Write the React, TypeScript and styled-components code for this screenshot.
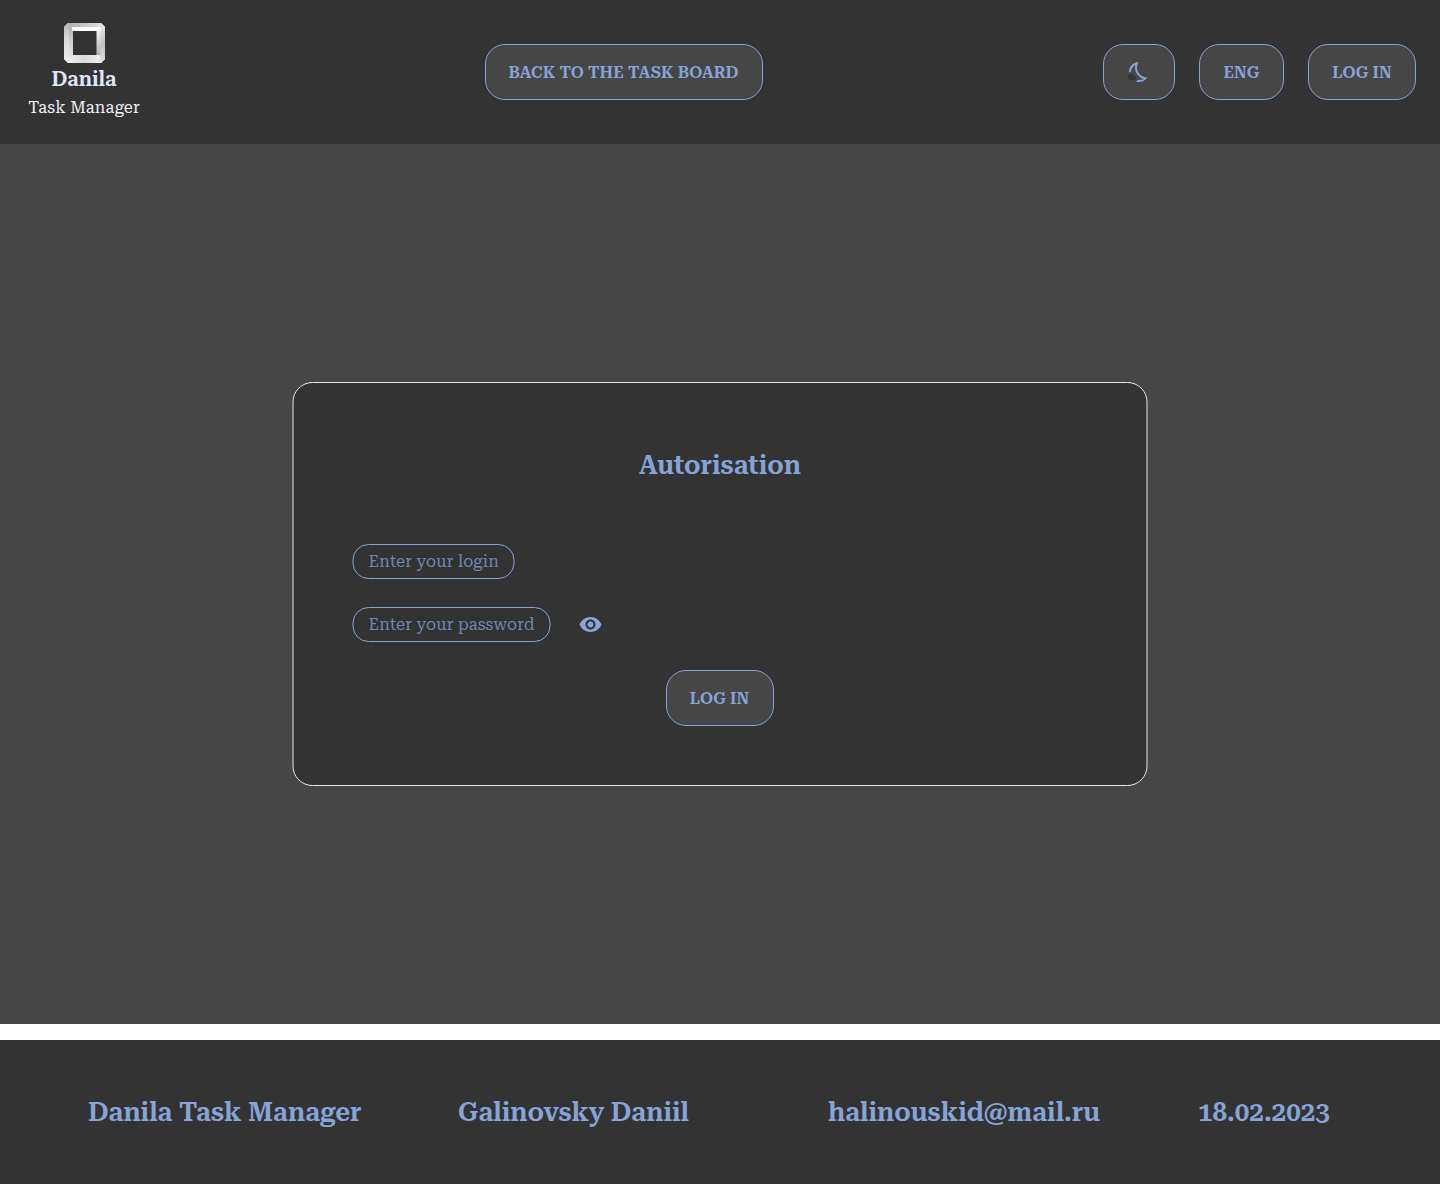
import React from 'react';
import styled, { createGlobalStyle } from 'styled-components';
import { MdVisibility } from 'react-icons/md';

const blue = '#87a4d8';
const dark = '#333333';
const grey = '#464646';

const GlobalStyle = createGlobalStyle`
  * { box-sizing: border-box; }
  body { margin: 0; background: #fff; font-family: "Roboto Serif", "Noto Serif", "DejaVu Serif Condensed", "DejaVu Serif", serif; }
`;
const Page = styled.div`
  min-height: 1184px;
  display: flex;
  flex-direction: column;
`;
const Header = styled.header`
  height: 144px;
  padding: 0 24px;
  background: ${dark};
  display: flex;
  align-items: center;
  justify-content: space-between;
`;
const Brand = styled.div`
  width: 120px;
  height: 100px;
  display: flex;
  flex-direction: column;
  align-items: center;
  white-space: nowrap;
`;
const BrandName = styled.div`
  margin: 1px 0;
  font-size: 20px;
  line-height: 28px;
  font-weight: 600;
  color: #dfe6f8;
`;
const BrandSub = styled.div`
  font-size: 16.4px;
  line-height: 28px;
  letter-spacing: 0.18px;
  color: #f1f1f1;
`;
const Actions = styled.nav`
  display: flex;
  gap: 24px;
`;
const Button = styled.button<{ $width: number }>`
  width: ${p => p.$width}px;
  height: 56px;
  padding: 0;
  display: flex;
  align-items: center;
  justify-content: center;
  border: 1px solid ${blue};
  border-radius: 20px;
  background: ${grey};
  color: ${blue};
  font-family: inherit;
  font-size: 16.3px;
  letter-spacing: 0.08px;
  font-weight: 600;
  white-space: nowrap;
`;
const Main = styled.main`
  height: 880px;
  background: ${grey};
  display: flex;
  align-items: center;
  justify-content: center;
`;
const Form = styled.section`
  width: 855px;
  height: 404px;
  margin-right: 1px;
  transform: translateX(0.5px);
  padding: 59px;
  border: 1px solid #dfe6f8;
  border-radius: 20px;
  background: ${dark};
  display: flex;
  flex-direction: column;
`;
const Title = styled.h1`
  margin: 0 0 56px;
  font-size: 26px;
  line-height: 46px;
  font-weight: 600;
  text-align: center;
  color: ${blue};
`;
const FieldRow = styled.div`
  height: 35px;
  margin-bottom: 28px;
  display: flex;
  align-items: center;
  gap: 28px;
  color: ${blue};
`;
const Field = styled.input<{ $width: number }>`
  width: ${p => p.$width}px;
  height: 35px;
  padding: 0 15px;
  border: 1px solid ${blue};
  border-radius: 16px;
  background: transparent;
  color: ${blue};
  font-family: inherit;
  font-size: 16.4px;
  letter-spacing: 0.18px;
  &::placeholder { color: ${blue}; opacity: 0.75; }
`;
const EyeIcon = styled(MdVisibility)`
  margin-bottom: 1px;
  transform: translateY(0.5px);
`;
const Submit = styled.div`
  display: flex;
  justify-content: center;
  transform: translateX(-0.5px);
`;
const Footer = styled.footer`
  height: 144px;
  margin-top: 16px;
  padding: 0 88px;
  background: ${dark};
  display: grid;
  grid-template-columns: 370px 370px 370px 1fr;
  align-items: center;
  color: ${blue};
  font-size: 26px;
  font-weight: 600;
  white-space: nowrap;
`;

const Logo = () => (
  <svg width="42" height="42" viewBox="0 0 42 42">
    <defs>
      <linearGradient id="top">
        <stop stopColor="#a6a6a6" />
        <stop offset="1" stopColor="#e6e6e6" />
      </linearGradient>
      <linearGradient id="left" x2="0" y2="1">
        <stop stopColor="#b4b4b4" />
        <stop offset="0.4" stopColor="#dcdcdc" />
        <stop offset="1" stopColor="#eceeed" />
      </linearGradient>
      <linearGradient id="innerLeft" x2="0" y2="1">
        <stop stopColor="#a4a4a4" />
        <stop offset="1" stopColor="#dedede" />
      </linearGradient>
      <linearGradient id="right" x2="0" y2="1">
        <stop stopColor="#e4e4e4" />
        <stop offset="0.5" stopColor="#c2c2c2" />
        <stop offset="1" stopColor="#dde0df" />
      </linearGradient>
      <linearGradient id="innerRight" x2="0" y2="1">
        <stop stopColor="#f6f6f6" />
        <stop offset="1" stopColor="#b0b0b0" />
      </linearGradient>
      <linearGradient id="bottom">
        <stop stopColor="#f0f2f1" />
        <stop offset="0.5" stopColor="#dadada" />
        <stop offset="1" stopColor="#f0f0f0" />
      </linearGradient>
    </defs>
    <path d="M5 1h33l4 4v32l-4 4H5l-4-4V5z" fill="url(#bottom)" />
    <path d="M5 1h33l4 4H9L1 5z" fill="url(#top)" />
    <path d="M1 5l4-4 5 4v28l-5 8-4-4z" fill="url(#left)" />
    <path d="M6 5h4v28l-4 4z" fill="url(#innerLeft)" opacity="0.45" />
    <path d="M37 5h5v32l-4 4-1-4z" fill="url(#right)" />
    <path d="M33 8h4.5v25H33z" fill="url(#innerRight)" />
    <path d="M9 5h28.5v4H9z" fill="#fff" />
    <path d="M10 9h23.5v24H10z" fill={dark} />
  </svg>
);
const Moon = () => (
  <svg width="24" height="24" viewBox="0 0 24 24">
    <path fill={blue} d="M19.78 17.51c-2.47 0-6.57-1.33-8.68-5.43C8.77 7.57 10.6 3.6 11.63 2.01 6.27 2.2 1.98 6.59 1.98 12c0 .14.02.28.02.42.61-.26 1.28-.42 1.98-.42 0-3.09 1.73-5.77 4.3-7.1C7.8 7.15 7.86 10.06 9.33 13c1.5 2.9 4.2 5.1 7.5 6.1-1.4.7-3 .9-4.8.9h-1.5c-.4.6-.95 1.1-1.66 1.51.98.32 2.03.5 3.11.5 3.5 0 6.58-1.8 8.37-4.52-.18.02-.37.02-.57.02z" />
    <path fill={dark} d="M7 16h-.18C6.4 14.84 5.3 14 4 14c-1.66 0-3 1.34-3 3s1.34 3 3 3h3c1.1 0 2-.9 2-2s-.9-2-2-2z" />
  </svg>
);

export default function App() {
  return (
    <Page>
      <GlobalStyle />
      <Header>
        <Brand><Logo /><BrandName>Danila</BrandName><BrandSub>Task Manager</BrandSub></Brand>
        <Button $width={278}>BACK TO THE TASK BOARD</Button>
        <Actions>
          <Button $width={72} aria-label="Theme"><Moon /></Button>
          <Button $width={85}>ENG</Button>
          <Button $width={108}>LOG IN</Button>
        </Actions>
      </Header>
      <Main>
        <Form>
          <Title>Autorisation</Title>
          <FieldRow><Field $width={162} placeholder="Enter your login" /></FieldRow>
          <FieldRow><Field $width={198} placeholder="Enter your password" /><EyeIcon size={24} /></FieldRow>
          <Submit><Button $width={108}>LOG IN</Button></Submit>
        </Form>
      </Main>
      <Footer>
        <span>Danila Task Manager</span>
        <span>Galinovsky Daniil</span>
        <span>halinouskid@mail.ru</span>
        <span>18.02.2023</span>
      </Footer>
    </Page>
  );
}
